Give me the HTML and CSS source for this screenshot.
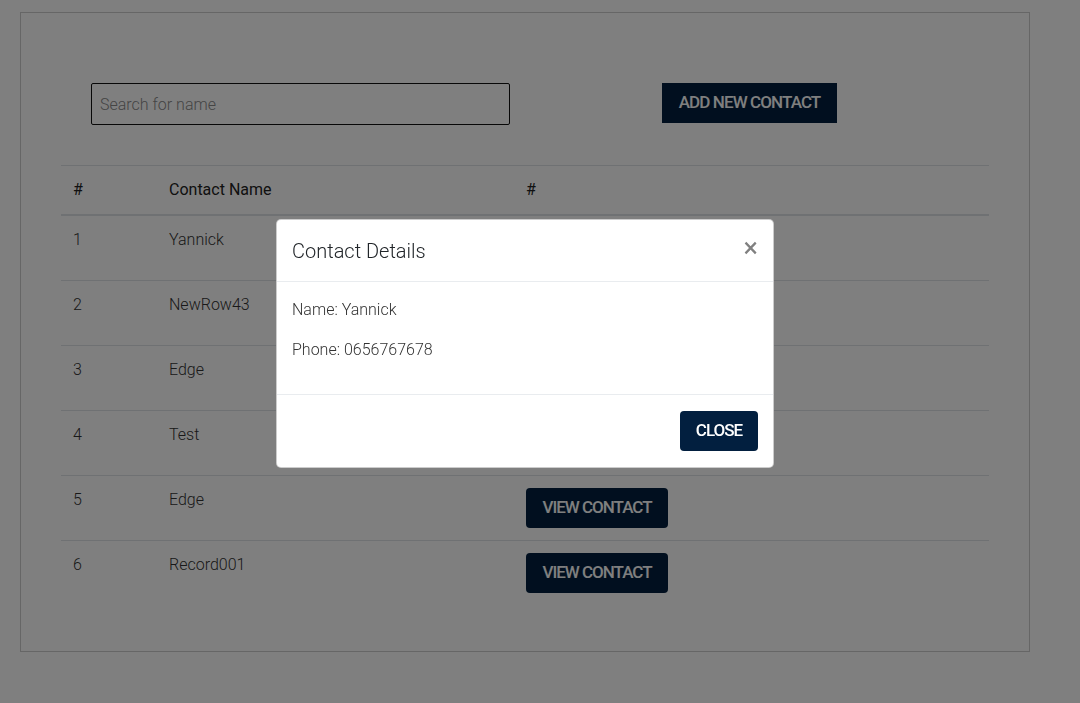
FILE: index.html
```html
<!DOCTYPE html>
<html>
<head>
<meta charset="utf-8">
<link rel="stylesheet" href="styles.css">
</head>
<body>
<div class="card">
  <div class="toolbar">
    <input class="search" type="text" placeholder="Search for name">
    <button class="btn btn-add">ADD NEW CONTACT</button>
  </div>
  <table class="table">
    <thead>
      <tr><th class="c1">#</th><th class="c2">Contact Name</th><th class="c3">#</th></tr>
    </thead>
    <tbody>
      <tr><td>1</td><td>Yannick</td><td><button class="btn btn-view">VIEW CONTACT</button></td></tr>
      <tr><td>2</td><td>NewRow43</td><td><button class="btn btn-view">VIEW CONTACT</button></td></tr>
      <tr><td>3</td><td>Edge</td><td><button class="btn btn-view">VIEW CONTACT</button></td></tr>
      <tr><td>4</td><td>Test</td><td><button class="btn btn-view">VIEW CONTACT</button></td></tr>
      <tr><td>5</td><td>Edge</td><td><button class="btn btn-view">VIEW CONTACT</button></td></tr>
      <tr class="last"><td>6</td><td>Record001</td><td><button class="btn btn-view">VIEW CONTACT</button></td></tr>
    </tbody>
  </table>
</div>
<div class="backdrop"></div>
<div class="modal">
  <div class="modal-header">
    <h5 class="modal-title">Contact Details</h5>
    <span class="close">&times;</span>
  </div>
  <div class="modal-body">
    <p>Name: Yannick</p>
    <p>Phone: 0656767678</p>
  </div>
  <div class="modal-footer">
    <button class="btn btn-close">CLOSE</button>
  </div>
</div>
</body>
</html>
```
FILE: styles.css
```css
* { box-sizing: border-box; }
html, body { margin: 0; padding: 0; }
body {
  background: #fff;
  font-family: Roboto, "Liberation Sans", sans-serif;
  font-size: 16px;
  line-height: 24px;
  color: #212529;
  height: 703px;
  overflow: hidden;
}
.card {
  margin: 12px 0 0 20px;
  width: 1010px;
  height: 640px;
  border: 1px solid #ccc;
  padding: 70px 40px 0 40px;
}
.toolbar {
  display: flex;
  align-items: flex-start;
  padding-left: 30px;
  height: 82px;
}
.search {
  width: 419px;
  height: 42px;
  border: 1px solid #111;
  border-radius: 2px;
  padding: 0 8px;
  font-family: Roboto, sans-serif;
  font-weight: 300;
  font-size: 16px;
  color: #495057;
  outline: none;
}
.search::placeholder { color: #8a8a8a; }
.btn {
  font-family: Roboto, sans-serif;
  font-weight: 500;
  font-size: 17px;
  letter-spacing: -1px;
  color: #fff;
  background: #021f3f;
  border: none;
  height: 40px;
  padding: 0 0 2px 0;
  text-align: center;
  cursor: pointer;
}
.btn-add {
  margin-left: 152px;
  width: 175px;
  height: 40px;
  border-radius: 0;
  letter-spacing: -0.9px;
}
.btn-view {
  width: 142px;
  border-radius: 4px;
}
.table {
  width: 928px;
  border-collapse: collapse;
}
.table th {
  text-align: left;
  font-weight: 400;
  padding: 12px;
  border-top: 1px solid #dee2e6;
  border-bottom: 2px solid #dee2e6;
  vertical-align: bottom;
  color: #222;
}
.table .c1 { width: 96px; }
.table .c2 { width: 357px; }
.table td {
  padding: 12px;
  vertical-align: top;
  border-top: 1px solid #dee2e6;
  font-weight: 300;
  color: #333;
  height: 64px;
}
.backdrop {
  position: fixed;
  inset: 0;
  background: rgba(0, 0, 0, 0.5);
}
.modal {
  position: fixed;
  left: 276px;
  top: 219px;
  width: 498px;
  background: #fff;
  border: 1px solid rgba(0, 0, 0, 0.2);
  border-radius: 5px;
}
.modal-header {
  display: flex;
  align-items: center;
  justify-content: space-between;
  padding: 15px;
  border-bottom: 1px solid #e9ecef;
  height: 62px;
}
.modal-title {
  margin: 0;
  font-size: 20px;
  font-weight: 300;
  line-height: 30px;
  color: #212529;
}
.close {
  font-size: 27px;
  font-weight: 400;
  color: #808080;
  line-height: 1;
  margin-right: 0;
  margin-top: -4px;
}
.modal-body {
  padding: 16px 15px;
  border-bottom: 1px solid #e9ecef;
}
.modal-body p {
  margin: 0 0 16px;
  font-weight: 300;
  color: #333;
  font-size: 16px;
}
.modal-footer {
  display: flex;
  justify-content: flex-end;
  padding: 16px 15px;
}
.btn-close {
  width: 78px;
  border-radius: 4px;
}
```
